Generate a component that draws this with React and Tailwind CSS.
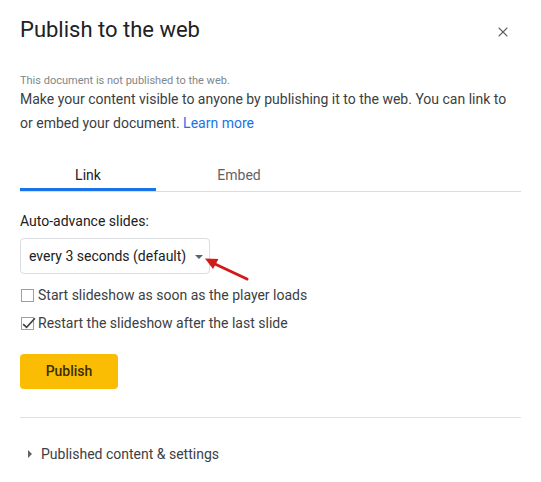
import { X } from 'lucide-react'

// Publish-to-the-web dialog (Slides), with the red annotation arrow on top

export default function App() {
  return (
    <div className="relative w-[541px] h-[482px] bg-white font-['Roboto',sans-serif] text-[#3c4043]">
      {/* Header */}
      <div className="flex items-start justify-between pl-5 pr-[30px] pt-4">
        <h1 className="text-[22px] leading-[28px] text-[#202124]">Publish to the web</h1>
        <button className="mt-[8px] text-[#5f6368]">
          <X size={16} strokeWidth={1.6} />
        </button>
      </div>

      <div className="px-5">
        <p className="mt-[30px] text-[11px] leading-[13px] text-[#80868b]">
          This document is not published to the web.
        </p>
        <p className="text-[14px] leading-[24px]">
          Make your content visible to anyone by publishing it to the web. You can link to
          or embed your document. <span className="text-[#1a73e8]">Learn more</span>
        </p>

        {/* Tabs */}
        <div className="mt-6 flex border-b border-[#dadce0]">
          <div className="w-[136px] h-8 pt-[6px] flex justify-center text-[14px] leading-5 text-[#202124] border-b-[3px] border-[#1a73e8] -mb-px">
            Link
          </div>
          <div className="w-[166px] h-8 pt-[6px] flex justify-center text-[14px] leading-5 text-[#5f6368]">
            Embed
          </div>
        </div>

        <div className="mt-[19px] text-[14px] leading-5 text-[#202124]">Auto-advance slides:</div>

        {/* Dropdown */}
        <div className="mt-[7px] w-[190px] h-[36px] rounded border border-[#dadce0] flex items-center justify-between pl-2 pr-[6px] text-[14px] text-[#202124]">
          <span>every 3 seconds (default)</span>
          <span className="w-0 h-0 border-x-[4px] border-x-transparent border-t-[4px] border-t-[#5f6368] mt-px" />
        </div>

        {/* Checkboxes */}
        <div className="mt-[9px] flex flex-col gap-[4px] text-[14px] leading-[24px]">
          <label className="flex items-center gap-[4px]">
            <span className="w-[13px] h-[13px] border border-[#9aa0a6] ml-px" />
            <span>Start slideshow as soon as the player loads</span>
          </label>
          <label className="flex items-center gap-[4px]">
            <span className="w-[13px] h-[13px] border border-[#9aa0a6] ml-px relative">
              <svg viewBox="0 0 14 14" className="absolute -left-px -top-[3px] w-[15px] h-[15px]">
                <path d="M2 8.5 L5.2 11.5 L13 3" fill="none" stroke="#3c4043" strokeWidth="1.5" />
              </svg>
            </span>
            <span>Restart the slideshow after the last slide</span>
          </label>
        </div>

        <button className="mt-[19px] w-[98px] h-[35px] rounded bg-[#fbbc04] text-[14px] font-medium text-[#3c2e00]">
          Publish
        </button>

        <div className="mt-[28px] border-t border-[#e0e0e0]" />

        <div className="mt-[26px] flex items-center gap-[9px] pl-2 text-[14px] leading-5">
          <span className="w-0 h-0 border-y-[4px] border-y-transparent border-l-[4px] border-l-[#5f6368]" />
          <span>Published content &amp; settings</span>
        </div>
      </div>

      {/* Red annotation arrow */}
      <svg className="absolute left-[200px] top-[250px]" width="52" height="34" viewBox="0 0 52 34">
        <path d="M47 29 L15 14" stroke="#d11a1a" strokeWidth="3" strokeLinecap="round" />
        <path d="M5 8.5 L18.5 9 L13 19 Z" fill="#d11a1a" />
      </svg>
    </div>
  )
}
